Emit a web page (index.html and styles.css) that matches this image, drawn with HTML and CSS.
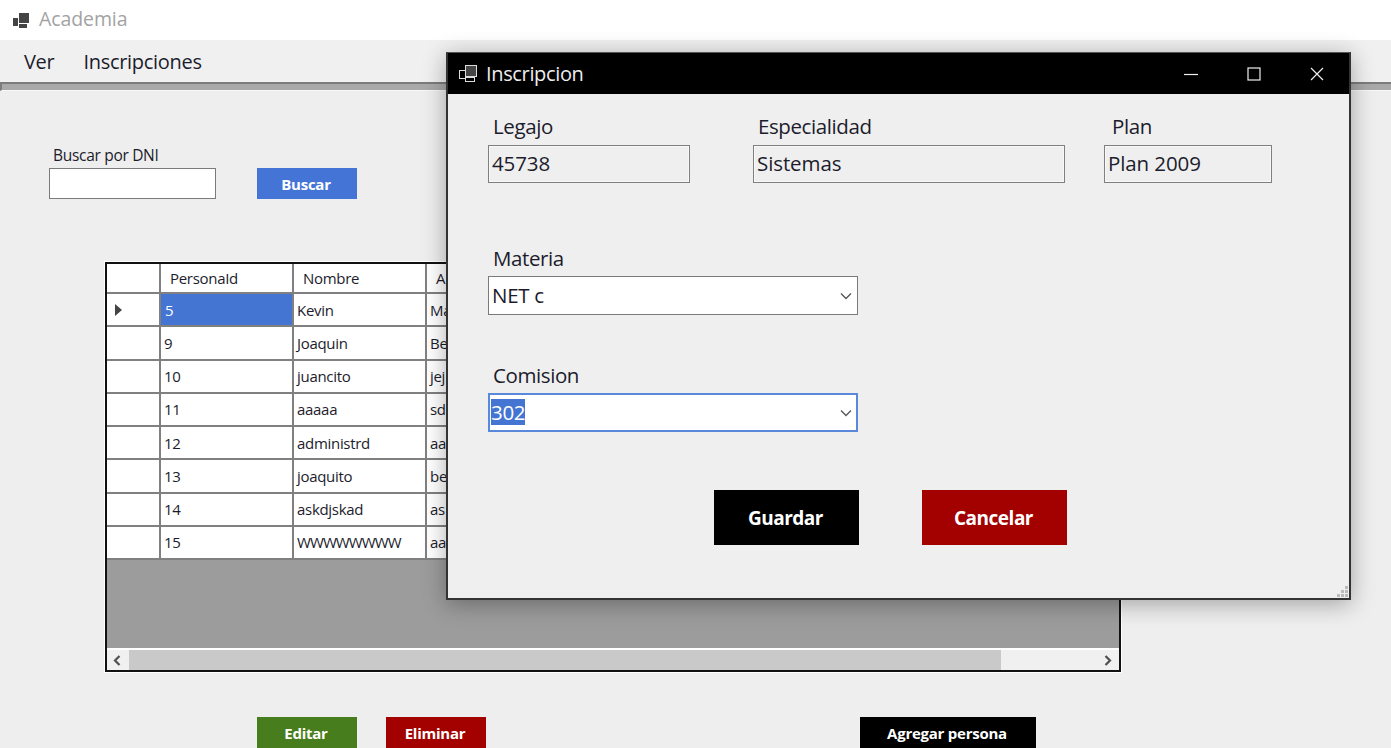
FILE: index.html

```html
<!DOCTYPE html>
<html lang="es">
<head>
  <meta charset="UTF-8">
  <title>Academia</title>
  <link rel="stylesheet" href="styles.css">
</head>
<body>
  <div class="titlebar">
    <svg class="app-icon" width="17" height="17" viewBox="0 0 17 17">
      <rect x="0" y="6" width="5" height="8" fill="#444"/>
      <rect x="6" y="1" width="10" height="10" fill="#444"/>
      <rect x="6" y="12" width="8" height="4" fill="#444"/>
    </svg>
    <span class="app-name">Academia</span>
  </div>

  <div class="menu">
    <span class="menu-item">Ver</span>
    <span class="menu-item">Inscripciones</span>
  </div>
  <div class="mdi-edge"></div>

  <div class="search">
    <label class="search-label">Buscar por DNI</label>
    <div class="search-row">
      <input class="search-input" type="text">
      <button class="btn btn-small btn-blue">Buscar</button>
    </div>
  </div>

  <div class="gridview">
    <div class="grid-rows">
      <div class="grid-row grid-head">
        <div class="cell"></div>
        <div class="cell">PersonaId</div>
        <div class="cell">Nombre</div>
        <div class="cell">A</div>
      </div>
      <div class="grid-row">
        <div class="cell cell-arrow"><span class="row-arrow"></span></div>
        <div class="cell cell-selected">5</div>
        <div class="cell">Kevin</div>
        <div class="cell">Ma</div>
      </div>
      <div class="grid-row">
        <div class="cell"></div>
        <div class="cell">9</div>
        <div class="cell">Joaquin</div>
        <div class="cell">Be</div>
      </div>
      <div class="grid-row">
        <div class="cell"></div>
        <div class="cell">10</div>
        <div class="cell">juancito</div>
        <div class="cell">jej</div>
      </div>
      <div class="grid-row">
        <div class="cell"></div>
        <div class="cell">11</div>
        <div class="cell">aaaaa</div>
        <div class="cell">sd</div>
      </div>
      <div class="grid-row">
        <div class="cell"></div>
        <div class="cell">12</div>
        <div class="cell">administrd</div>
        <div class="cell">aa</div>
      </div>
      <div class="grid-row">
        <div class="cell"></div>
        <div class="cell">13</div>
        <div class="cell">joaquito</div>
        <div class="cell">be</div>
      </div>
      <div class="grid-row">
        <div class="cell"></div>
        <div class="cell">14</div>
        <div class="cell">askdjskad</div>
        <div class="cell">as</div>
      </div>
      <div class="grid-row">
        <div class="cell"></div>
        <div class="cell">15</div>
        <div class="cell cell-tight">WWWWWWWW</div>
        <div class="cell">aa</div>
      </div>
    </div>
    <div class="grid-empty"></div>
    <div class="scrollbar">
      <svg class="scroll-arrow" width="10" height="11" viewBox="0 0 10 11"><path d="M7.5 1 3 5.5 7.5 10" fill="none" stroke="#505050" stroke-width="2.2"/></svg>
      <div class="scroll-thumb"></div>
      <svg class="scroll-arrow" width="10" height="11" viewBox="0 0 10 11"><path d="M2.5 1 7 5.5 2.5 10" fill="none" stroke="#505050" stroke-width="2.2"/></svg>
    </div>
  </div>

  <div class="actions">
    <button class="btn btn-small btn-green">Editar</button>
    <button class="btn btn-small btn-red">Eliminar</button>
    <button class="btn btn-small btn-black btn-add">Agregar persona</button>
  </div>

  <!-- ventana de inscripcion -->
  <div class="dialog">
    <div class="dialog-title">
      <svg class="dialog-icon" width="19" height="18" viewBox="0 0 19 18">
        <rect x="0.5" y="5.5" width="6" height="8" fill="none" stroke="#ddd"/>
        <rect x="6.5" y="0.5" width="11" height="11" fill="#444" stroke="#ddd"/>
        <rect x="6.5" y="12.5" width="9" height="4" fill="none" stroke="#ddd"/>
      </svg>
      <span class="dialog-name">Inscripcion</span>
      <div class="win-buttons">
        <svg width="14" height="14" viewBox="0 0 14 14"><path d="M0 7.5h14" stroke="#eee" stroke-width="1.2"/></svg>
        <svg width="14" height="14" viewBox="0 0 14 14"><rect x="1" y="1" width="12" height="12" fill="none" stroke="#eee" stroke-width="1.2"/></svg>
        <svg width="14" height="14" viewBox="0 0 14 14"><path d="M1 1l12 12M13 1 1 13" stroke="#eee" stroke-width="1.2"/></svg>
      </div>
    </div>
    <div class="dialog-body">
      <div class="field-row">
        <div class="field field-legajo">
          <label class="field-label">Legajo</label>
          <input class="readonly" type="text" value="45738" readonly>
        </div>
        <div class="field field-espec">
          <label class="field-label">Especialidad</label>
          <input class="readonly" type="text" value="Sistemas" readonly>
        </div>
        <div class="field field-plan">
          <label class="field-label label-plan">Plan</label>
          <input class="readonly" type="text" value="Plan 2009" readonly>
        </div>
      </div>

      <div class="field field-combo">
        <label class="field-label">Materia</label>
        <div class="combo">
          <span class="combo-text">NET c</span>
          <svg width="12" height="8" viewBox="0 0 12 8"><path d="M1 1.5 6 6.5l5-5" fill="none" stroke="#555" stroke-width="1.3"/></svg>
        </div>
      </div>

      <div class="field field-combo field-comision">
        <label class="field-label">Comision</label>
        <div class="combo combo-focus">
          <span class="combo-text combo-selected">302</span>
          <svg width="12" height="8" viewBox="0 0 12 8"><path d="M1 1.5 6 6.5l5-5" fill="none" stroke="#555" stroke-width="1.3"/></svg>
        </div>
      </div>

      <div class="dialog-actions">
        <button class="btn btn-large btn-black">Guardar</button>
        <button class="btn btn-large btn-red">Cancelar</button>
      </div>
    </div>
    <svg class="grip" width="11" height="11" viewBox="0 0 11 11">
      <path d="M8 0h3v3H8zM4 4h3v3H4zM8 4h3v3H8zM0 8h3v3H0zM4 8h3v3H4zM8 8h3v3H8z" fill="#bbb"/>
    </svg>
  </div>
</body>
</html>
```

FILE: styles.css

```css
* {
  box-sizing: border-box;
}
html, body {
  height: 100%;
}
body {
  margin: 0;
  overflow: hidden;
  position: relative;
  background: #eeeeee;
  color: #1c1c2c;
  font-family: "Open Sans", "Noto Sans", sans-serif;
}

.titlebar {
  display: flex;
  align-items: center;
  height: 40px;
  padding-left: 13px;
  background: #fff;
}
.app-name {
  margin-left: 9px;
  padding-bottom: 3px;
  font-size: 19.5px;
  letter-spacing: -0.1px;
  color: #a3a3a3;
}

.menu {
  display: flex;
  align-items: center;
  gap: 29px;
  height: 42px;
  padding-left: 24px;
  background: #f0f0f0;
}
.menu-item {
  font-size: 20px;
  letter-spacing: -0.3px;
}
.mdi-edge {
  height: 9px;
  background: #a9a9a9;
  border-top: 2px solid #7c7c7c;
  border-left: 2px solid #7c7c7c;
  border-bottom: 1px solid #f8f8f8;
}

.search {
  margin: 55px 0 0 49px;
}
.search-label {
  display: block;
  height: 22px;
  margin-left: 4px;
  font-size: 15.5px;
  line-height: 18px;
  letter-spacing: -0.3px;
}
.search-row {
  display: flex;
  gap: 41px;
}
.search-input {
  width: 167px;
  height: 31px;
  background: #fff;
  border: 1px solid #7a7a7a;
}

.btn {
  border: 0;
  padding: 0 2px 0 0;
  font-family: inherit;
  font-weight: 700;
  color: #fff;
}
.btn-small {
  width: 100px;
  height: 31px;
  font-size: 15px;
  letter-spacing: -0.25px;
}
.btn-large {
  width: 145px;
  height: 55px;
  font-size: 19px;
  letter-spacing: -0.5px;
}
.btn-blue { background: #4475d6; }
.btn-green { background: #477d1c; }
.btn-red { background: #a30000; }
.btn-black { background: #000; }
.btn-add {
  width: 176px;
  margin-left: 345px;
}

.gridview {
  display: flex;
  flex-direction: column;
  width: 1016px;
  height: 410px;
  margin: 63px 0 0 105px;
  background: #9c9c9c;
  border: 2px solid #111;
  outline: 1px solid #fff;
}
.grid-row {
  display: grid;
  grid-template-columns: 54px 133px 133px 1fr;
  height: 33.25px;
  background: #fff;
  font-size: 15px;
  letter-spacing: -0.3px;
}
.grid-head {
  height: 30px;
}
.cell {
  display: flex;
  align-items: center;
  padding-left: 3px;
  border-right: 2px solid #808080;
  border-bottom: 2px solid #808080;
  white-space: nowrap;
  overflow: hidden;
}
.grid-head .cell {
  padding-left: 9px;
}
.cell-arrow {
  padding-left: 8px;
}
.cell-tight {
  letter-spacing: -0.9px;
}
.row-arrow {
  width: 0;
  height: 0;
  border-top: 6px solid transparent;
  border-bottom: 6px solid transparent;
  border-left: 7px solid #444;
}
.cell-selected {
  padding-left: 4px;
  background: #4475d2;
  color: #fff;
}
.grid-empty {
  flex: 1;
}
.scrollbar {
  display: flex;
  align-items: center;
  justify-content: space-between;
  height: 22px;
  padding: 0 6px 0 5px;
  background: #f0f0f0;
  border-top: 2px solid #fff;
}
.scroll-thumb {
  width: 872px;
  height: 100%;
  margin-left: 7px;
  margin-right: auto;
  background: #c9c9c9;
}

.actions {
  display: flex;
  gap: 29px;
  margin: 45px 0 0 257px;
}

.dialog {
  position: absolute;
  left: 446px;
  top: 52px;
  width: 905px;
  height: 548px;
  background: #efefef;
  border: 2px solid #333;
  border-top: 1px solid #555;
  box-shadow: 0 4px 22px rgba(0, 0, 0, 0.32);
}
.dialog-title {
  display: flex;
  align-items: center;
  height: 41px;
  padding-left: 11px;
  background: #000;
  color: #eee;
}
.dialog-name {
  margin-left: 8px;
  padding-bottom: 1px;
  font-size: 20px;
  letter-spacing: -0.35px;
}
.win-buttons {
  display: flex;
  gap: 49px;
  margin-left: auto;
  margin-right: 25px;
}
.dialog-body {
  padding: 20px 0 0 40px;
}
.field-row {
  display: flex;
}
.field-label {
  display: block;
  margin-left: 5px;
  height: 31px;
  font-size: 20.5px;
  line-height: 25px;
  letter-spacing: -0.4px;
}
.field-combo .field-label {
  line-height: 27px;
}
.label-plan {
  margin-left: 8px;
}
.readonly {
  display: block;
  width: 100%;
  height: 38px;
  padding: 0 2px 2px 3px;
  background: #efefef;
  border: 1px solid #808080;
  box-shadow: inset 0 0 0 1px #f8f8f8;
  font-family: inherit;
  font-size: 20.5px;
  letter-spacing: -0.1px;
  color: #1c1c2c;
  outline: 0;
}
.field-legajo { width: 202px; }
.field-espec { width: 312px; margin-left: 63px; }
.field-plan { width: 168px; margin-left: 39px; }

.field-combo {
  width: 370px;
  margin-top: 62px;
}
.field-comision {
  margin-top: 47px;
}
.combo {
  display: flex;
  align-items: center;
  justify-content: space-between;
  height: 39px;
  padding: 0 5px 0 3px;
  background: #fff;
  border: 1px solid #7a7a7a;
  font-size: 20.5px;
  letter-spacing: -0.3px;
}
.combo-text {
  margin-bottom: 2px;
}
.combo-focus {
  border: 2px solid #5a88da;
  padding: 0 4px 0 1px;
}
.combo-selected {
  background: #4475d2;
  color: #fff;
  line-height: 26px;
}
.dialog-actions {
  display: flex;
  gap: 63px;
  margin: 58px 0 0 226px;
}
.grip {
  position: absolute;
  right: 1px;
  bottom: 1px;
}
```
